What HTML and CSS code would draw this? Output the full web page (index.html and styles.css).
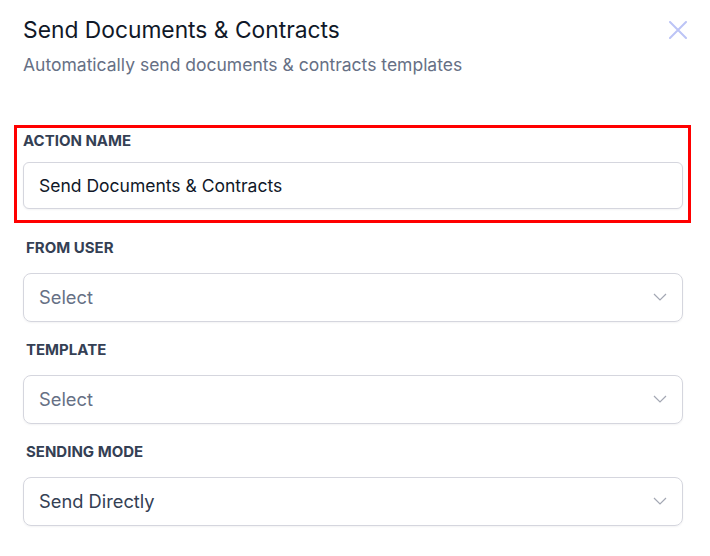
FILE: index.html
```html
<!DOCTYPE html>
<html lang="en">
<head>
	<meta charset="UTF-8">
	<title>Send Documents &amp; Contracts</title>
	<link rel="stylesheet" href="styles.css">
</head>
<body>
<main class="panel">
	<header class="head">
		<div>
			<h1 class="title">Send Documents &amp; Contracts</h1>
			<p class="subtitle">Automatically send documents &amp; contracts templates</p>
		</div>
		<button class="close" type="button" aria-label="Close">
			<svg width="18" height="18" viewBox="0 0 18 18"><path d="M1 1 L17 17 M17 1 L1 17" stroke="currentColor" stroke-width="2" stroke-linecap="round"/></svg>
		</button>
	</header>

	<form class="form">
		<div class="field active">
			<label class="label" for="actionName">ACTION NAME</label>
			<input class="input" id="actionName" type="text" value="Send Documents &amp; Contracts">
		</div>

		<div class="field">
			<label class="label shift">FROM USER</label>
			<div class="select placeholder">
				<span>Select</span>
				<svg class="chev" width="14" height="8" viewBox="0 0 14 8"><path d="M1 1 L7 7 L13 1" fill="none" stroke="currentColor" stroke-width="1.2"/></svg>
			</div>
		</div>

		<div class="field">
			<label class="label shift">TEMPLATE</label>
			<div class="select placeholder">
				<span>Select</span>
				<svg class="chev" width="14" height="8" viewBox="0 0 14 8"><path d="M1 1 L7 7 L13 1" fill="none" stroke="currentColor" stroke-width="1.2"/></svg>
			</div>
		</div>

		<div class="field">
			<label class="label shift">SENDING MODE</label>
			<div class="select">
				<span>Send Directly</span>
				<svg class="chev" width="14" height="8" viewBox="0 0 14 8"><path d="M1 1 L7 7 L13 1" fill="none" stroke="currentColor" stroke-width="1.2"/></svg>
			</div>
		</div>
	</form>
</main>
</body>
</html>
```

FILE: styles.css
```css
body{
	margin: 0;
	background: #fff;
	font-family: Inter, "Noto Sans", sans-serif;
}

.panel{
	width: 710px;
}

.head{
	display: flex;
	justify-content: space-between;
	align-items: flex-start;
	padding: 15px 23px 0 23px;
}

.title{
	margin: 0;
	font-size: 22.8px;
	line-height: 30px;
	font-weight: 400;
	color: #101828;
}

.subtitle{
	margin: 8px 0 0 0;
	font-size: 17.5px;
	line-height: 24px;
	color: #667085;
}

.close{
	border: none;
	background: transparent;
	padding: 0;
	margin: 6px 0 0 0;
	color: #bcc4f6;
	cursor: pointer;
	display: flex;
}

/* fields */
.form{
	display: flex;
	flex-direction: column;
	gap: 9px;
	padding: 0 0 0 14px;
	margin-top: 48px;
	width: 677px;
}

.field{
	border: 3px solid transparent;
	padding: 3px 5px 0 6px;
	display: flex;
	flex-direction: column;
}

.field.active{
	border-color: #f00;
	padding-bottom: 11px;
}

.label{
	font-size: 15px;
	line-height: 20px;
	font-weight: 700;
	color: #344054;
	margin-bottom: 11px;
}

.label.shift{
	padding-left: 3px;
	margin-bottom: 15px;
}

.input{
	box-sizing: border-box;
	height: 47px;
	border: 1px solid #d5d6de;
	border-radius: 6px;
	padding: 0 15px;
	font: inherit;
	font-size: 17.5px;
	color: #101828;
	box-shadow: 0 1px 2px rgba(16, 24, 40, 0.05);
	outline: none;
}

.select{
	box-sizing: border-box;
	height: 49px;
	border: 1px solid #d5d6de;
	border-radius: 8px;
	padding: 0 15px 2px 15px;
	display: flex;
	align-items: center;
	justify-content: space-between;
	font-size: 18.3px;
	color: #344054;
	box-shadow: 0 1px 2px rgba(16, 24, 40, 0.05);
}

.select.placeholder{
	color: #667085;
}

.chev{
	color: #a3a7b3;
}
```
